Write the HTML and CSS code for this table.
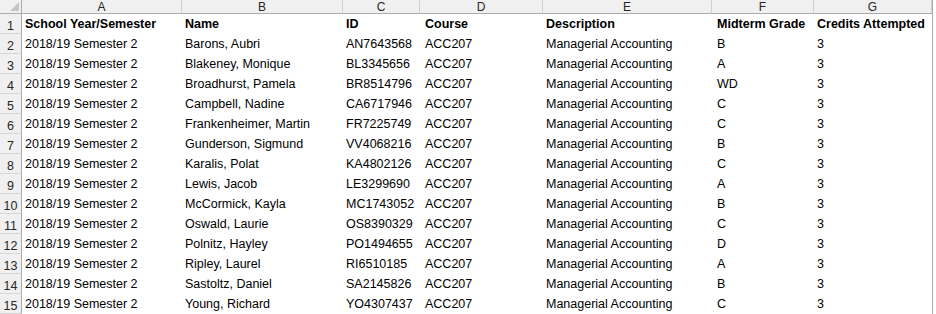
FILE: index.html
```html
<!DOCTYPE html>
<html>
<head>
<meta charset="utf-8">
<link rel="stylesheet" href="styles.css">
</head>
<body>
<div class="sheet">
  <div class="grid">
    <div class="ch corner"><span class="tri"></span></div>
    <div class="ch">A</div><div class="ch">B</div><div class="ch">C</div><div class="ch">D</div><div class="ch">E</div><div class="ch">F</div><div class="ch">G</div>

    <div class="rh">1</div><div class="c b">School Year/Semester</div><div class="c b">Name</div><div class="c b">ID</div><div class="c b d">Course</div><div class="c b">Description</div><div class="c b f">Midterm Grade</div><div class="c b">Credits Attempted</div>
    <div class="rh">2</div><div class="c">2018/19 Semester 2</div><div class="c">Barons, Aubri</div><div class="c">AN7643568</div><div class="c d">ACC207</div><div class="c">Managerial Accounting</div><div class="c f">B</div><div class="c">3</div>
    <div class="rh">3</div><div class="c">2018/19 Semester 2</div><div class="c">Blakeney, Monique</div><div class="c">BL3345656</div><div class="c d">ACC207</div><div class="c">Managerial Accounting</div><div class="c f">A</div><div class="c">3</div>
    <div class="rh">4</div><div class="c">2018/19 Semester 2</div><div class="c">Broadhurst, Pamela</div><div class="c">BR8514796</div><div class="c d">ACC207</div><div class="c">Managerial Accounting</div><div class="c f">WD</div><div class="c">3</div>
    <div class="rh">5</div><div class="c">2018/19 Semester 2</div><div class="c">Campbell, Nadine</div><div class="c">CA6717946</div><div class="c d">ACC207</div><div class="c">Managerial Accounting</div><div class="c f">C</div><div class="c">3</div>
    <div class="rh">6</div><div class="c">2018/19 Semester 2</div><div class="c">Frankenheimer, Martin</div><div class="c">FR7225749</div><div class="c d">ACC207</div><div class="c">Managerial Accounting</div><div class="c f">C</div><div class="c">3</div>
    <div class="rh">7</div><div class="c">2018/19 Semester 2</div><div class="c">Gunderson, Sigmund</div><div class="c">VV4068216</div><div class="c d">ACC207</div><div class="c">Managerial Accounting</div><div class="c f">B</div><div class="c">3</div>
    <div class="rh">8</div><div class="c">2018/19 Semester 2</div><div class="c">Karalis, Polat</div><div class="c">KA4802126</div><div class="c d">ACC207</div><div class="c">Managerial Accounting</div><div class="c f">C</div><div class="c">3</div>
    <div class="rh">9</div><div class="c">2018/19 Semester 2</div><div class="c">Lewis, Jacob</div><div class="c">LE3299690</div><div class="c d">ACC207</div><div class="c">Managerial Accounting</div><div class="c f">A</div><div class="c">3</div>
    <div class="rh">10</div><div class="c">2018/19 Semester 2</div><div class="c">McCormick, Kayla</div><div class="c">MC1743052</div><div class="c d">ACC207</div><div class="c">Managerial Accounting</div><div class="c f">B</div><div class="c">3</div>
    <div class="rh">11</div><div class="c">2018/19 Semester 2</div><div class="c">Oswald, Laurie</div><div class="c">OS8390329</div><div class="c d">ACC207</div><div class="c">Managerial Accounting</div><div class="c f">C</div><div class="c">3</div>
    <div class="rh">12</div><div class="c">2018/19 Semester 2</div><div class="c">Polnitz, Hayley</div><div class="c">PO1494655</div><div class="c d">ACC207</div><div class="c">Managerial Accounting</div><div class="c f">D</div><div class="c">3</div>
    <div class="rh">13</div><div class="c">2018/19 Semester 2</div><div class="c">Ripley, Laurel</div><div class="c">RI6510185</div><div class="c d">ACC207</div><div class="c">Managerial Accounting</div><div class="c f">A</div><div class="c">3</div>
    <div class="rh">14</div><div class="c">2018/19 Semester 2</div><div class="c">Sastoltz, Daniel</div><div class="c">SA2145826</div><div class="c d">ACC207</div><div class="c">Managerial Accounting</div><div class="c f">B</div><div class="c">3</div>
    <div class="rh">15</div><div class="c">2018/19 Semester 2</div><div class="c">Young, Richard</div><div class="c">YO4307437</div><div class="c d">ACC207</div><div class="c">Managerial Accounting</div><div class="c f">C</div><div class="c">3</div>
  </div>
  <div class="edge"></div>
</div>
</body>
</html>
```

FILE: styles.css
```css
html, body {
  margin: 0;
  padding: 0;
  background: #ffffff;
}
.sheet {
  display: flex;
  width: 936px;
  height: 314px;
  overflow: hidden;
  font-family: "Liberation Sans", Arial, sans-serif;
  font-size: 12.5px;
  color: #000;
}
.grid {
  flex: none;
  display: grid;
  grid-template-columns: 22px 160px 161px 77px 123px 169px 102px 118px;
  grid-template-rows: 14px repeat(15, 20px);
}
.ch {
  box-sizing: border-box;
  padding-top: 1px;
  background: #f0f0f0;
  border-right: 1px solid #cfcfcf;
  border-bottom: 1px solid #ababab;
  font-size: 12px;
  line-height: 12px;
  color: #262626;
  text-align: center;
}
.ch.corner {
  position: relative;
  border-right: 1px solid #ababab;
}
.tri {
  position: absolute;
  right: 2px;
  bottom: 2px;
  width: 0;
  height: 0;
  border-left: 9px solid transparent;
  border-bottom: 9px solid #c6c6c6;
}
.rh {
  box-sizing: border-box;
  display: flex;
  align-items: flex-end;
  justify-content: center;
  padding-bottom: 0;
  background: #f0f0f0;
  border-right: 1px solid #ababab;
  border-bottom: 1px solid #d6d6d6;
  font-size: 12.5px;
  line-height: 14px;
  color: #262626;
}
.c {
  box-sizing: border-box;
  display: flex;
  align-items: flex-end;
  padding: 0 3px 2px 3px;
  white-space: nowrap;
  overflow: hidden;
  line-height: 15px;
}
.c.d, .c.f {
  padding-left: 5px;
}
.c.b {
  font-weight: bold;
}
.edge {
  flex: none;
  width: 1px;
  height: 314px;
  background: #ababab;
}
```
